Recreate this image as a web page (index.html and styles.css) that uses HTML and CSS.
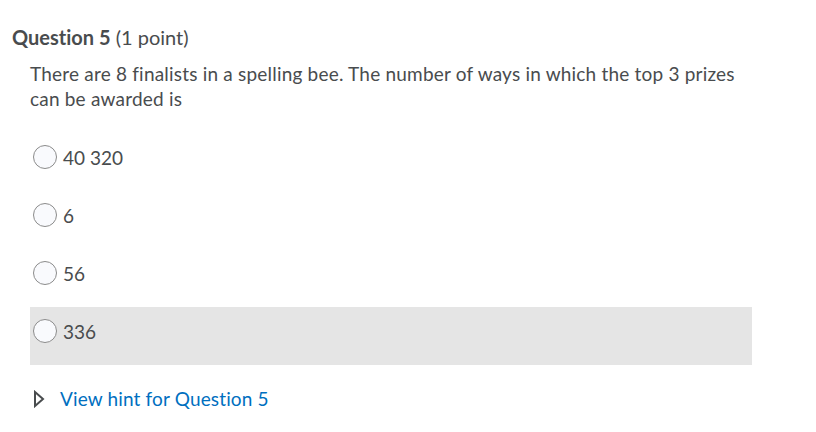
FILE: index.html
```html
<!DOCTYPE html>
<html>
<head>
<meta charset="utf-8">
<link rel="stylesheet" href="styles.css">
</head>
<body>
<div class="page">
  <h2 class="q-title"><strong>Question 5</strong> <span class="pts">(1 point)</span></h2>
  <div class="q-body">
    <p class="q-text">There are 8 finalists in a spelling bee. The number of ways in which the top 3 prizes can be awarded is</p>
    <div class="options">
      <label class="opt"><span class="radio"></span><span class="opt-text">40 320</span></label>
      <label class="opt"><span class="radio"></span><span class="opt-text">6</span></label>
      <label class="opt"><span class="radio"></span><span class="opt-text">56</span></label>
      <label class="opt hover"><span class="radio"></span><span class="opt-text">336</span></label>
    </div>
    <div class="hint">
      <svg class="tri" width="12" height="18" viewBox="0 0 12 18"><path d="M2 2 L10 9 L2 16 Z" fill="none" stroke="#494c4e" stroke-width="2" stroke-linejoin="miter"/></svg>
      <a class="hint-link" href="#">View hint for Question 5</a>
    </div>
  </div>
</div>
</body>
</html>
```
FILE: styles.css
```css
html, body {
  margin: 0;
  padding: 0;
  background: #ffffff;
}
body {
  font-family: Lato, "Open Sans", sans-serif;
  color: #494c4e;
  font-variant-ligatures: none;
}
.page {
  padding: 25px 0 0 12px;
}
.q-title {
  margin: 0;
  font-size: 20px;
  line-height: 24px;
  font-weight: 400;
  color: #494c4e;
}
.q-title strong {
  font-weight: 700;
}
.q-body {
  padding-left: 18px;
  width: 722px;
}
.q-text {
  margin: 12px 0 0 0;
  font-size: 19px;
  line-height: 25px;
  letter-spacing: 0.2px;
  width: 720px;
}
.options {
  margin-top: 22px;
  display: flex;
  flex-direction: column;
}
.opt {
  display: flex;
  align-items: flex-start;
  height: 58px;
  box-sizing: border-box;
  padding: 12px 0 0 3px;
}
.opt.hover {
  background: #e5e5e5;
}
.radio {
  width: 22px;
  height: 22px;
  border: 1px solid #8b8b8b;
  border-radius: 50%;
  background: #f9fafd;
  flex: none;
}
.opt-text {
  margin-left: 6px;
  font-size: 19px;
  line-height: 24px;
  margin-top: 1px;
  color: #494c4e;
}
.hint {
  margin-top: 22px;
  display: flex;
  align-items: center;
  height: 24px;
}
.tri {
  margin-left: 3px;
  display: block;
}
.hint-link {
  margin-left: 15px;
  font-size: 19px;
  line-height: 24px;
  letter-spacing: 0.15px;
  color: #006fbf;
  text-decoration: none;
}
```
